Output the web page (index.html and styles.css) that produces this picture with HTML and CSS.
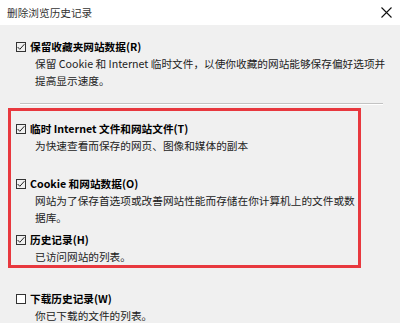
FILE: index.html
```html
<!DOCTYPE html>
<html lang="zh-CN">
<head>
<meta charset="utf-8">
<title>删除浏览历史记录</title>
<link rel="stylesheet" href="styles.css">
</head>
<body>
<div class="dialog">
  <header class="titlebar">
    <span class="title">删除浏览历史记录</span>
    <svg class="close" width="11" height="11" viewBox="0 0 11 11"><path d="M0.5 0.5 L10.5 10.5 M10.5 0.5 L0.5 10.5" stroke="#111" stroke-width="1.1" fill="none"/></svg>
  </header>
  <main class="body">
    <section class="item item-first">
      <div class="label"><span class="box checked"><svg width="10" height="10" viewBox="0 0 10 10"><polyline points="1.6,5 3.8,7.3 8.4,2.2" fill="none" stroke="#222" stroke-width="1"/></svg></span><span>保留收藏夹网站数据(R)</span></div>
      <p class="desc">保留 Cookie 和 Internet 临时文件，以使你收藏的网站能够保存偏好选项并提高显示速度。</p>
    </section>
    <div class="sep"></div>
    <div class="highlight">
      <section class="item item-temp">
        <div class="label"><span class="box checked"><svg width="10" height="10" viewBox="0 0 10 10"><polyline points="1.6,5 3.8,7.3 8.4,2.2" fill="none" stroke="#222" stroke-width="1"/></svg></span><span>临时 Internet 文件和网站文件(T)</span></div>
        <p class="desc">为快速查看而保存的网页、图像和媒体的副本</p>
      </section>
      <section class="item item-cookie">
        <div class="label"><span class="box checked"><svg width="10" height="10" viewBox="0 0 10 10"><polyline points="1.6,5 3.8,7.3 8.4,2.2" fill="none" stroke="#222" stroke-width="1"/></svg></span><span>Cookie 和网站数据(O)</span></div>
        <p class="desc">网站为了保存首选项或改善网站性能而存储在你计算机上的文件或数据库。</p>
      </section>
      <section class="item item-history">
        <div class="label"><span class="box checked"><svg width="10" height="10" viewBox="0 0 10 10"><polyline points="1.6,5 3.8,7.3 8.4,2.2" fill="none" stroke="#222" stroke-width="1"/></svg></span><span>历史记录(H)</span></div>
        <p class="desc">已访问网站的列表。</p>
      </section>
    </div>
    <section class="item item-download">
      <div class="label"><span class="box"></span><span>下载历史记录(W)</span></div>
      <p class="desc">你已下载的文件的列表。</p>
    </section>
  </main>
</div>
</body>
</html>
```

FILE: styles.css
```css
html, body {
  margin: 0;
  padding: 0;
  background: #f0f0f0;
  overflow: hidden;
}
.dialog {
  width: 400px;
  height: 323px;
  font-family: "Noto Sans CJK SC", "Noto Sans", sans-serif;
  font-size: 10.67px;
  line-height: 17px;
  color: #111;
  background: #f0f0f0;
}
.titlebar {
  height: 25px;
  background: #ffffff;
  display: flex;
  align-items: center;
  justify-content: space-between;
  padding: 0 8px 0 7px;
  box-sizing: border-box;
}
.title {
  color: #333;
  font-size: 10.67px;
}
.close {
  display: block;
}
.body {
  padding-top: 13px;
}
.item {
  padding-left: 16px;
}
.label {
  display: flex;
  align-items: center;
  height: 17px;
  font-weight: 700;
  color: #000;
}
.box {
  width: 10px;
  height: 10px;
  border: 1px solid #333;
  box-sizing: border-box;
  margin-right: 4px;
  margin-top: 1px;
  position: relative;
  background: #fff;
  flex: none;
}
.box svg {
  position: absolute;
  left: -1px;
  top: -1px;
}
.box.checked {
  background: transparent;
}
.desc {
  margin: 0;
  padding-left: 19px;
  padding-right: 6px;
  color: #222;
}
.sep {
  margin: 14px 0 0 20px;
  width: 363px;
  height: 1px;
  background: #c3c3c3;
  border-bottom: 1px solid #ffffff;
}
.highlight {
  margin: 3px 0 0 8px;
  width: 353px;
  box-sizing: border-box;
  border: 3px solid #e8383e;
  padding: 9px 0 0 0;
}
.highlight .item {
  padding-left: 5px;
}
.item-cookie {
  margin-top: 21px;
}
.item-cookie .desc {
  padding-right: 0;
}
.item-history {
  margin-top: 5px;
}
.item-download {
  margin-top: 22px;
}
```
